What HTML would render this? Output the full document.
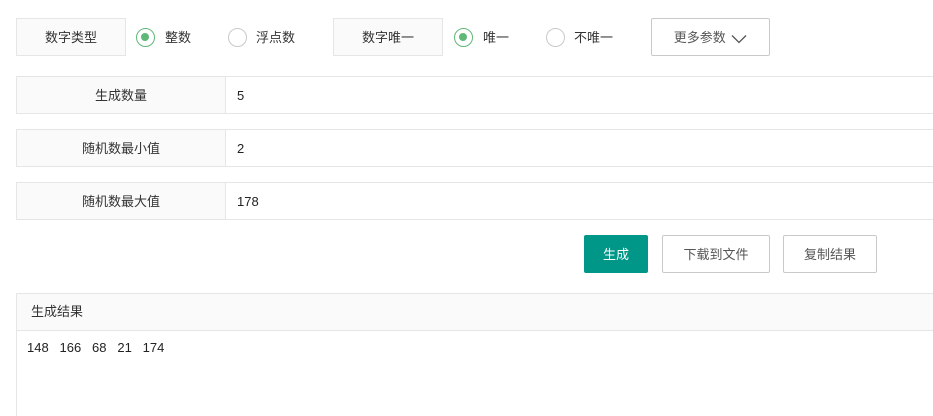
<!DOCTYPE html><html><head><meta charset="utf-8"><style>
*{box-sizing:border-box;margin:0;padding:0}
html{height:416px;overflow:hidden}
body{width:933px;height:416px;overflow:hidden;background:#fff;font-family:"Liberation Sans","Noto Sans CJK SC",sans-serif;font-size:13px;color:#333;position:relative}
.a{position:absolute}
.lbl{background:#fafafa;border:1px solid #e6e6e6;text-align:center;line-height:38px;color:#333}
.rd{width:19px;height:19px;border-radius:50%;border:1.5px solid #c9c9c9}
.rd.on{border-color:#5fb878}
.rd.on::after{content:"";position:absolute;left:4px;top:4px;width:8px;height:8px;border-radius:50%;background:#5fb878}
.t{line-height:20px}
.row{left:16px;right:-2px;height:38px;border:1px solid #e6e6e6}
.row .l{position:absolute;left:0;top:0;width:209px;height:100%;background:#fafafa;border-right:1px solid #e6e6e6;text-align:center;line-height:37px}
.row .v{position:absolute;left:220px;top:0;line-height:37px;color:#222}
.btn{height:38px;border:1px solid #c9c9c9;border-radius:2px;text-align:center;line-height:37px;color:#555;background:#fff}
</style></head><body>
<div class="a lbl" style="left:16px;top:18px;width:110px;height:38px">数字类型</div>
<div class="a rd on" style="left:136px;top:28px"></div><div class="a t" style="left:165px;top:28px">整数</div>
<div class="a rd" style="left:228px;top:28px"></div><div class="a t" style="left:256px;top:28px">浮点数</div>
<div class="a lbl" style="left:333px;top:18px;width:110px;height:38px">数字唯一</div>
<div class="a rd on" style="left:454px;top:28px"></div><div class="a t" style="left:483px;top:28px">唯一</div>
<div class="a rd" style="left:546px;top:28px"></div><div class="a t" style="left:574px;top:28px">不唯一</div>
<div class="a btn" style="left:651px;top:18px;width:119px;height:38px;color:#555">更多参数 <svg width="16" height="10" viewBox="0 0 16 10" style="vertical-align:middle;margin-left:2px"><path d="M1 1.5L8 8.5L15 1.5" fill="none" stroke="#555" stroke-width="1.3"/></svg></div>
<div class="a row" style="top:76px"><div class="l">生成数量</div><div class="v">5</div></div>
<div class="a row" style="top:129px"><div class="l">随机数最小值</div><div class="v">2</div></div>
<div class="a row" style="top:182px"><div class="l">随机数最大值</div><div class="v">178</div></div>
<div class="a btn" style="left:584px;top:235px;width:64px;background:#009688;border-color:#009688;color:#fff">生成</div>
<div class="a btn" style="left:662px;top:235px;width:108px">下载到文件</div>
<div class="a btn" style="left:783px;top:235px;width:94px">复制结果</div>
<div class="a" style="left:16px;right:-2px;top:293px;height:123px;border:1px solid #e6e6e6;border-bottom:none">
<div style="height:37px;background:#fafafa;border-bottom:1px solid #e6e6e6;line-height:36px;padding-left:14px">生成结果</div>
<div style="padding:9px 0 0 10px;color:#222">148&nbsp;&nbsp;&nbsp;166&nbsp;&nbsp;&nbsp;68&nbsp;&nbsp;&nbsp;21&nbsp;&nbsp;&nbsp;174</div>
</div>
</body></html>
